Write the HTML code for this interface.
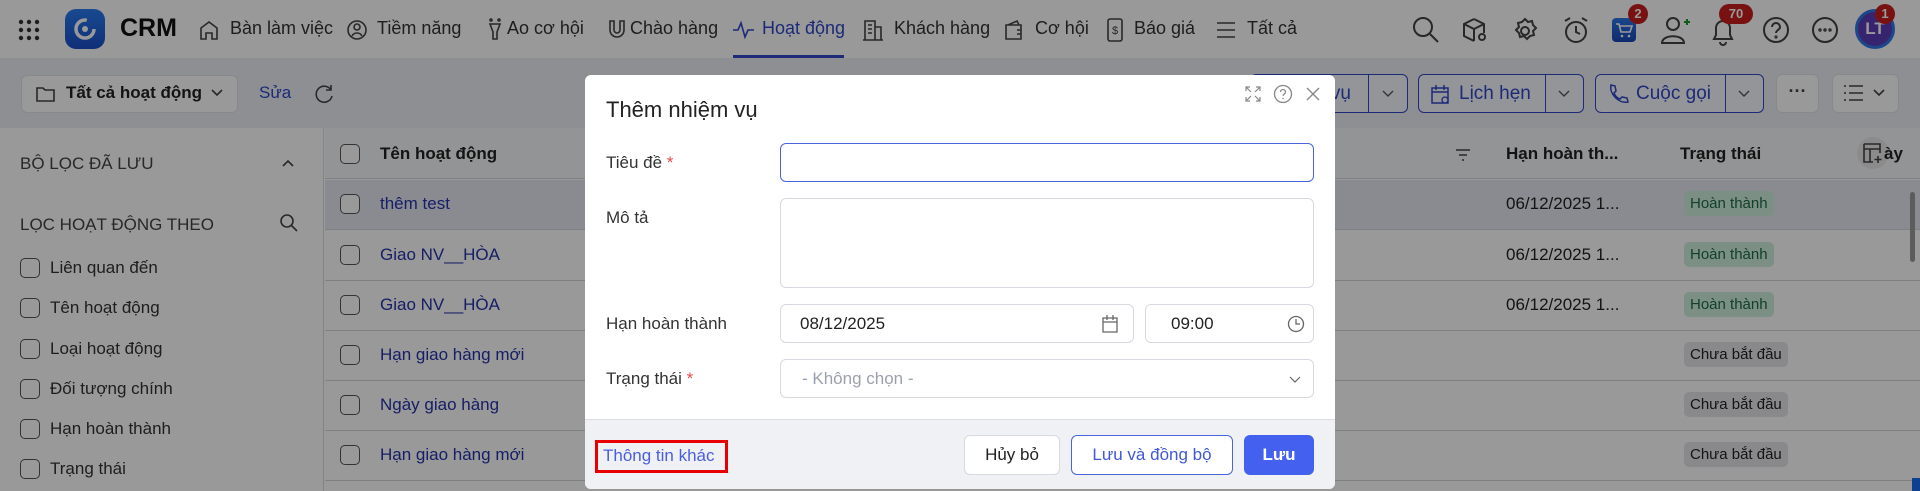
<!DOCTYPE html>
<html style="width:1920px;height:491px;overflow:hidden"><head><meta charset="utf-8"><style>
*{box-sizing:border-box;margin:0;padding:0}
body{width:1920px;height:491px;overflow:hidden;position:relative;font-family:"Liberation Sans",Arial,sans-serif;background:#fff;color:#222}
.a{position:absolute}
.hdr{left:0;top:0;width:1920px;height:58px;background:#fff;box-shadow:0 2px 4px rgba(0,0,0,.12)}
.nav{top:18px;font-size:18px;color:#333;white-space:nowrap}
.ic{stroke:#444;fill:none;stroke-width:1.6}
.tb{left:0;top:58px;width:1920px;height:70px;background:#eceef3}
.btn{background:#fff;border-radius:6px;border:1px solid #e2e4ea}
.bb{border:1.5px solid #2f46c8;border-radius:6px;background:#f7f8fd;color:#2f46c8;font-size:19px;overflow:hidden}
.side{left:0;top:128px;width:324px;height:363px;background:#fff;border-right:1px solid #ddd}
.cb{width:20px;height:20px;border:1.5px solid #555;border-radius:5px;background:#fff}
.sl{font-size:17px;color:#333}
.row{left:325px;width:1595px;height:50px;border-bottom:1px solid #d4d6dc;background:#fff}
.lk{font-size:17px;color:#2633a8}
.dt{font-size:17px;color:#222}
.bg{font-size:15px;padding:4px 6px;border-radius:5px}
.ov{left:0;top:0;width:1920px;height:491px;background:rgba(0,0,0,.4)}
.md{left:585px;top:75px;width:750px;height:414px;background:#fff;border-radius:6px;overflow:hidden}
.lb{font-size:17px;color:#333}
.in{border:1px solid #d6d9e0;border-radius:6px;background:#fff}
.star{color:#e5484d}
</style></head><body>

<div class="a hdr"></div>
<svg class="a" style="left:18px;top:19px" width="22" height="22"><g fill="#333"><circle cx="3" cy="3" r="2.2"/><circle cx="11" cy="3" r="2.2"/><circle cx="19" cy="3" r="2.2"/><circle cx="3" cy="11" r="2.2"/><circle cx="11" cy="11" r="2.2"/><circle cx="19" cy="11" r="2.2"/><circle cx="3" cy="19" r="2.2"/><circle cx="11" cy="19" r="2.2"/><circle cx="19" cy="19" r="2.2"/></g></svg>
<div class="a" style="left:65px;top:9px;width:40px;height:40px;border-radius:11px;background:linear-gradient(#2a7bf0,#1a4fc9)"></div>
<svg class="a" style="left:70px;top:14px" width="30" height="30"><circle cx="15" cy="15" r="9" fill="none" stroke="#fff" stroke-width="3.5" stroke-dasharray="44 13"/><circle cx="15" cy="15" r="3" fill="#fff"/></svg>
<div class="a" style="left:120px;top:14px;font-size:25px;font-weight:bold;color:#111">CRM</div>

<svg class="a ic" style="left:198px;top:19px" width="22" height="22"><path d="M3 20V9l8-6 8 6v11h-5v-6h-6v6z"/></svg>
<div class="a nav" style="left:230px">Bàn làm việc</div>
<svg class="a ic" style="left:346px;top:19px" width="22" height="22"><circle cx="11" cy="11" r="9"/><circle cx="11" cy="8" r="3"/><path d="M6 17c2-4 8-4 10 0"/></svg>
<div class="a nav" style="left:377px">Tiềm năng</div>
<svg class="a ic" style="left:484px;top:18px" width="22" height="24"><path d="M6 6h10l-3 8v7h-4v-7z"/><circle cx="7" cy="2" r="1"/><circle cx="15" cy="2" r="1"/></svg>
<div class="a nav" style="left:507px">Ao cơ hội</div>
<svg class="a ic" style="left:606px;top:18px" width="22" height="24"><path d="M4 3v9a7 7 0 0014 0V3h-4v9a3 3 0 01-6 0V3z"/></svg>
<div class="a nav" style="left:630px">Chào hàng</div>
<svg class="a" style="left:732px;top:19px" width="24" height="22"><path d="M1 11h5l3-7 4 14 3-7h6" fill="none" stroke="#3046c8" stroke-width="1.6"/></svg>
<div class="a nav" style="left:762px;color:#3046c8">Hoạt động</div>
<div class="a" style="left:733px;top:55px;width:111px;height:3px;background:#3046c8"></div>
<svg class="a ic" style="left:862px;top:18px" width="22" height="24"><path d="M3 22V3h10v19M13 9h6v13M1 22h20M6 7h4M6 11h4M6 15h4"/></svg>
<div class="a nav" style="left:894px">Khách hàng</div>
<svg class="a ic" style="left:1003px;top:19px" width="22" height="22"><path d="M3 6h15v14H3zM5 6l9-4 2 4M14 11h4v4h-4"/></svg>
<div class="a nav" style="left:1035px">Cơ hội</div>
<svg class="a ic" style="left:1106px;top:17px" width="18" height="26"><rect x="2" y="2" width="14" height="22" rx="2"/><text x="9" y="17" font-size="11" text-anchor="middle" fill="#444" stroke="none" font-family="Liberation Sans">$</text></svg>
<div class="a nav" style="left:1134px">Báo giá</div>
<svg class="a ic" style="left:1215px;top:20px" width="22" height="20"><path d="M2 3h18M2 10h18M2 17h18"/></svg>
<div class="a nav" style="left:1247px">Tất cả</div>

<svg class="a ic" style="left:1412px;top:16px;stroke-width:2" width="28" height="28"><circle cx="11" cy="11" r="9"/><path d="M18 18l8 8"/></svg>
<svg class="a ic" style="left:1462px;top:17px;stroke-width:2" width="28" height="28"><path d="M12 2l10 5v9M12 2L2 7v12l10 5M2 7l10 5 10-5M12 12v12"/><circle cx="20" cy="20" r="3"/></svg>
<svg class="a ic" style="left:1511px;top:17px;stroke-width:2" width="28" height="28"><circle cx="14" cy="14" r="4"/><path d="M14 2l3 3 4-1 1 4 3 3-3 3 1 4-4 1-3 3-3-3-4 1-1-4-3-3 3-3-1-4 4-1z"/></svg>
<svg class="a ic" style="left:1562px;top:16px;stroke-width:2" width="28" height="30"><circle cx="14" cy="16" r="10"/><path d="M14 10v6l4 2M3 5l5-3M25 5l-5-3"/></svg>
<div class="a" style="left:1612px;top:18px;width:24px;height:24px;border-radius:4px;background:linear-gradient(#2f78e8,#1a45b8)"></div>
<svg class="a" style="left:1614px;top:20px" width="20" height="20"><path d="M2 4h3l2 8h9l2-6H6" fill="none" stroke="#fff" stroke-width="1.6"/><circle cx="8" cy="16" r="1.3" fill="#fff"/><circle cx="15" cy="16" r="1.3" fill="#fff"/></svg>
<div class="a" style="left:1628px;top:4px;width:20px;height:20px;border-radius:10px;background:#c81e1e;color:#fff;font-size:13px;font-weight:bold;text-align:center;line-height:20px">2</div>
<svg class="a ic" style="left:1660px;top:15px;stroke-width:2" width="30" height="30"><circle cx="13" cy="9" r="6"/><path d="M2 28c0-9 22-9 22 0z"/><path d="M24 7h6M27 4v6" stroke="#1a9a2a"/></svg>
<svg class="a ic" style="left:1710px;top:18px;stroke-width:2" width="26" height="28"><path d="M4 21h18l-2-4V10a7 7 0 00-14 0v7zM10 24a3 3 0 006 0"/></svg>
<div class="a" style="left:1719px;top:4px;width:34px;height:20px;border-radius:10px;background:#c81e1e;color:#fff;font-size:13px;font-weight:bold;text-align:center;line-height:20px">70</div>
<svg class="a ic" style="left:1762px;top:16px;stroke-width:2" width="28" height="28"><circle cx="14" cy="14" r="12"/><path d="M10 11a4 4 0 118 0c0 3-4 3-4 6"/><circle cx="14" cy="21" r=".6"/></svg>
<svg class="a ic" style="left:1811px;top:16px;stroke-width:2" width="28" height="28"><circle cx="14" cy="14" r="12"/><circle cx="9" cy="14" r=".7"/><circle cx="14" cy="14" r=".7"/><circle cx="19" cy="14" r=".7"/></svg>
<div class="a" style="left:1855px;top:9px;width:40px;height:40px;border-radius:20px;border:3px solid #2f78e8;background:#5a3fb8;color:#fff;font-size:17px;font-weight:bold;text-align:center;line-height:34px">LT</div>
<div class="a" style="left:1875px;top:4px;width:20px;height:20px;border-radius:10px;background:#c81e1e;color:#fff;font-size:13px;font-weight:bold;text-align:center;line-height:20px">1</div>

<div class="a tb"></div>
<div class="a btn" style="left:21px;top:75px;width:217px;height:38px"></div>
<svg class="a ic" style="left:36px;top:85px" width="20" height="18"><path d="M1 3h6l2 2h9v11H1z"/></svg>
<div class="a" style="left:66px;top:83px;font-size:17px;font-weight:bold;color:#222">Tất cả hoạt động</div>
<svg class="a ic" style="left:211px;top:89px" width="12" height="8"><path d="M1 1l5 5 5-5"/></svg>
<div class="a" style="left:259px;top:83px;font-size:17px;color:#3046c8">Sửa</div>
<svg class="a ic" style="left:313px;top:83px" width="22" height="22"><path d="M18 7a8 8 0 10 1 6M18 2v5h-5"/></svg>

<div class="a bb" style="left:1250px;top:74px;width:158px;height:39px"><div class="a" style="left:117px;top:0;width:1px;height:37px;background:#2f46c8"></div><div class="a" style="left:0;width:100px;text-align:right;top:8px">Nhiệm vụ</div></div>
<svg class="a" style="left:1382px;top:90px" width="12" height="8"><path d="M1 1l5 5 5-5" fill="none" stroke="#555" stroke-width="1.4"/></svg>
<div class="a bb" style="left:1418px;top:74px;width:166px;height:39px"><div class="a" style="left:126px;top:0;width:1px;height:37px;background:#2f46c8"></div><div class="a" style="left:40px;top:8px">Lịch hẹn</div></div>
<svg class="a" style="left:1430px;top:83px" width="20" height="22"><path d="M2 5h16v15H2zM2 9h16M6 2v5M14 2v5" fill="none" stroke="#2f46c8" stroke-width="1.5"/><circle cx="15" cy="17" r="3" fill="#f7f8fd" stroke="#2f46c8" stroke-width="1.3"/></svg>
<svg class="a" style="left:1558px;top:90px" width="12" height="8"><path d="M1 1l5 5 5-5" fill="none" stroke="#555" stroke-width="1.4"/></svg>
<div class="a bb" style="left:1595px;top:74px;width:169px;height:39px"><div class="a" style="left:129px;top:0;width:1px;height:37px;background:#2f46c8"></div><div class="a" style="left:40px;top:8px">Cuộc gọi</div></div>
<svg class="a" style="left:1607px;top:83px" width="22" height="22"><path d="M4 2l4 1 1 5-2 2c1 3 3 5 6 6l2-2 5 1 1 4c-9 2-19-8-17-17z" fill="none" stroke="#2f46c8" stroke-width="1.5"/></svg>
<svg class="a" style="left:1738px;top:90px" width="12" height="8"><path d="M1 1l5 5 5-5" fill="none" stroke="#555" stroke-width="1.4"/></svg>
<div class="a btn" style="left:1776px;top:74px;width:43px;height:39px;text-align:center;font-size:18px;line-height:33px;font-weight:bold;color:#444">···</div>
<div class="a btn" style="left:1832px;top:74px;width:67px;height:39px"></div>
<svg class="a ic" style="left:1843px;top:84px" width="22" height="18"><path d="M6 2h14M6 9h14M6 16h14M1 2h2M1 9h2M1 16h2"/></svg>
<svg class="a ic" style="left:1873px;top:89px" width="12" height="8"><path d="M1 1l5 5 5-5"/></svg>

<div class="a side"></div>
<div class="a sl" style="left:20px;top:154px;color:#444">BỘ LỌC ĐÃ LƯU</div>
<svg class="a ic" style="left:282px;top:159px" width="12" height="8"><path d="M1 7l5-5 5 5"/></svg>
<div class="a sl" style="left:20px;top:215px;color:#444">LỌC HOẠT ĐỘNG THEO</div>
<svg class="a ic" style="left:279px;top:213px" width="20" height="20"><circle cx="8" cy="8" r="6"/><path d="M12 12l6 6"/></svg>
<div class="a cb" style="left:20px;top:258px"></div><div class="a sl" style="left:50px;top:258px">Liên quan đến</div>
<div class="a cb" style="left:20px;top:298px"></div><div class="a sl" style="left:50px;top:298px">Tên hoạt động</div>
<div class="a cb" style="left:20px;top:339px"></div><div class="a sl" style="left:50px;top:339px">Loại hoạt động</div>
<div class="a cb" style="left:20px;top:379px"></div><div class="a sl" style="left:50px;top:379px">Đối tượng chính</div>
<div class="a cb" style="left:20px;top:419px"></div><div class="a sl" style="left:50px;top:419px">Hạn hoàn thành</div>
<div class="a cb" style="left:20px;top:459px"></div><div class="a sl" style="left:50px;top:459px">Trạng thái</div>

<div class="a row" style="top:128px;height:51px;background:#f6f7f9"></div>
<div class="a cb" style="left:340px;top:144px"></div>
<div class="a" style="left:380px;top:144px;font-size:17px;font-weight:bold">Tên hoạt động</div>
<svg class="a ic" style="left:1455px;top:149px" width="16" height="12"><path d="M1 1h14M4 6h8M7 11h2"/></svg>
<div class="a" style="left:1506px;top:144px;font-size:17px;font-weight:bold">Hạn hoàn th...</div>
<div class="a" style="left:1680px;top:144px;font-size:17px;font-weight:bold">Trạng thái</div>
<div class="a" style="left:1857px;top:137px;width:32px;height:32px;border-radius:16px;background:#e8e8ea"></div>
<svg class="a ic" style="left:1862px;top:142px" width="22" height="22"><path d="M2 2h16v9M2 2v18h9M2 7h16M8 7v13M16 14v7M12.5 17.5h7"/></svg>
<div class="a" style="left:1884px;top:144px;font-size:17px;font-weight:bold">ày</div>

<div class="a row" style="top:180px;background:#e5e8f2"></div>
<div class="a row" style="top:231px"></div>
<div class="a row" style="top:281px"></div>
<div class="a row" style="top:331px"></div>
<div class="a row" style="top:381px"></div>
<div class="a row" style="top:431px"></div>
<div class="a row" style="top:481px;height:10px;border-bottom:none"></div>

<div class="a cb" style="left:340px;top:194px"></div><div class="a lk" style="left:380px;top:194px">thêm test</div>
<div class="a cb" style="left:340px;top:245px"></div><div class="a lk" style="left:380px;top:245px">Giao NV__HÒA</div>
<div class="a cb" style="left:340px;top:295px"></div><div class="a lk" style="left:380px;top:295px">Giao NV__HÒA</div>
<div class="a cb" style="left:340px;top:345px"></div><div class="a lk" style="left:380px;top:345px">Hạn giao hàng mới</div>
<div class="a cb" style="left:340px;top:395px"></div><div class="a lk" style="left:380px;top:395px">Ngày giao hàng</div>
<div class="a cb" style="left:340px;top:445px"></div><div class="a lk" style="left:380px;top:445px">Hạn giao hàng mới</div>

<div class="a dt" style="left:1506px;top:194px">06/12/2025 1...</div>
<div class="a dt" style="left:1506px;top:245px">06/12/2025 1...</div>
<div class="a dt" style="left:1506px;top:295px">06/12/2025 1...</div>
<div class="a bg" style="left:1684px;top:191px;background:#cdeedd;color:#1f6b45">Hoàn thành</div>
<div class="a bg" style="left:1684px;top:242px;background:#cdeedd;color:#1f6b45">Hoàn thành</div>
<div class="a bg" style="left:1684px;top:292px;background:#cdeedd;color:#1f6b45">Hoàn thành</div>
<div class="a bg" style="left:1684px;top:342px;background:#e4e5ea;color:#222">Chưa bắt đầu</div>
<div class="a bg" style="left:1684px;top:392px;background:#e4e5ea;color:#222">Chưa bắt đầu</div>
<div class="a bg" style="left:1684px;top:442px;background:#e4e5ea;color:#222">Chưa bắt đầu</div>
<div class="a" style="left:1910px;top:192px;width:5px;height:70px;border-radius:3px;background:#999"></div>
<div class="a" style="left:1912px;top:478px;width:8px;height:13px;background:#1a6cf0"></div>

<div class="a ov"></div>

<div class="a md">
  <div class="a" style="left:21px;top:22px;font-size:22px;color:#222">Thêm nhiệm vụ</div>
  <svg class="a" style="left:660px;top:11px" width="16" height="16"><path d="M1 5V1h4M11 1h4v4M15 11v4h-4M5 15H1v-4M1 1l5 5M15 1l-5 5M15 15l-5-5M1 15l5-5" fill="none" stroke="#888" stroke-width="1.2"/></svg>
  <svg class="a" style="left:688px;top:9px" width="20" height="20"><circle cx="10" cy="10" r="8.5" fill="none" stroke="#888" stroke-width="1.3"/><path d="M7.5 8a2.5 2.5 0 115 0c0 2-2.5 2-2.5 4" fill="none" stroke="#888" stroke-width="1.3"/><circle cx="10" cy="14.5" r=".8" fill="#888"/></svg>
  <svg class="a" style="left:720px;top:11px" width="16" height="16"><path d="M2 2l12 12M14 2L2 14" stroke="#888" stroke-width="1.4"/></svg>

  <div class="a lb" style="left:21px;top:78px">Tiêu đề <span class="star">*</span></div>
  <div class="a in" style="left:195px;top:68px;width:534px;height:39px;border:1.5px solid #4a64e0"></div>
  <div class="a lb" style="left:21px;top:133px">Mô tả</div>
  <div class="a in" style="left:195px;top:123px;width:534px;height:90px"></div>
  <div class="a lb" style="left:21px;top:239px">Hạn hoàn thành</div>
  <div class="a in" style="left:195px;top:229px;width:354px;height:39px"></div>
  <div class="a" style="left:215px;top:239px;font-size:17px;color:#222">08/12/2025</div>
  <svg class="a" style="left:516px;top:239px" width="18" height="20"><path d="M2 4h14v14H2zM2 8h14M6 1v5M12 1v5" fill="none" stroke="#666" stroke-width="1.3"/></svg>
  <div class="a in" style="left:560px;top:229px;width:169px;height:39px"></div>
  <div class="a" style="left:586px;top:239px;font-size:17px;color:#222">09:00</div>
  <svg class="a" style="left:702px;top:240px" width="18" height="18"><circle cx="9" cy="9" r="7.5" fill="none" stroke="#666" stroke-width="1.3"/><path d="M9 4v5h4" fill="none" stroke="#666" stroke-width="1.3"/></svg>
  <div class="a lb" style="left:21px;top:294px">Trạng thái <span class="star">*</span></div>
  <div class="a in" style="left:195px;top:284px;width:534px;height:39px"></div>
  <div class="a" style="left:217px;top:294px;font-size:17px;color:#9aa0ad">- Không chọn -</div>
  <svg class="a" style="left:704px;top:301px" width="12" height="8"><path d="M1 1l5 5 5-5" fill="none" stroke="#666" stroke-width="1.2"/></svg>

  <div class="a" style="left:0;top:344px;width:750px;height:70px;background:#f0f1f4;border-top:1px solid #dcdee3"></div>
  <div class="a" style="left:10px;top:365px;width:133px;height:33px;border:3px solid #e60000"></div>
  <div class="a" style="left:18px;top:371px;font-size:17px;color:#4a5ee0">Thông tin khác</div>
  <div class="a" style="left:379px;top:360px;width:96px;height:40px;background:#fff;border:1px solid #d6d9e0;border-radius:6px;text-align:center;line-height:38px;font-size:17px;color:#222">Hủy bỏ</div>
  <div class="a" style="left:486px;top:360px;width:162px;height:40px;background:#fff;border:1.5px solid #4a64e0;border-radius:6px;text-align:center;line-height:37px;font-size:17px;color:#3f57d8">Lưu và đồng bộ</div>
  <div class="a" style="left:659px;top:360px;width:70px;height:40px;background:#4361ee;border-radius:6px;text-align:center;line-height:40px;font-size:17px;font-weight:bold;color:#fff">Lưu</div>
</div>
</body></html>
